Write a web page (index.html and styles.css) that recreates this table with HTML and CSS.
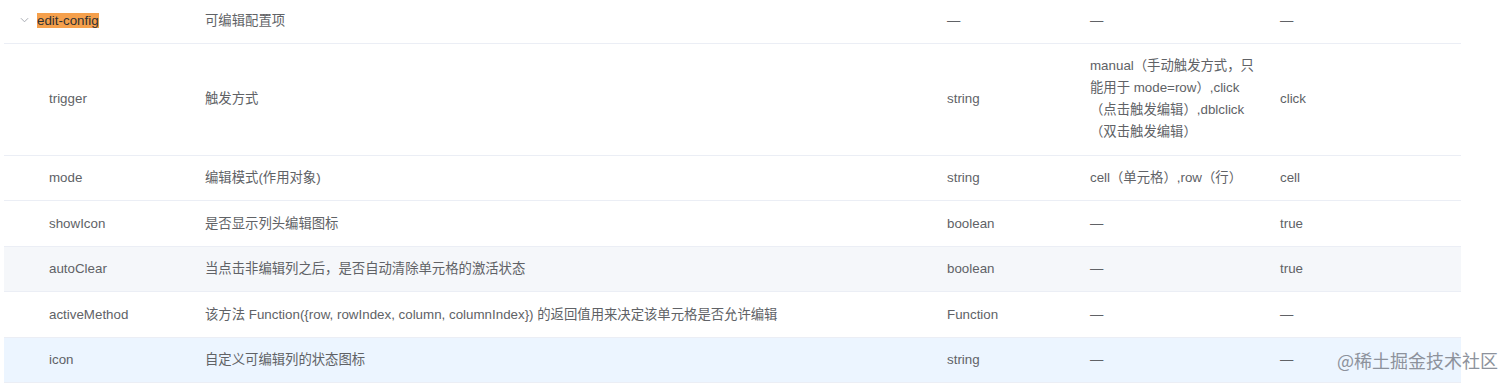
FILE: index.html
```html
<!DOCTYPE html>
<html lang="zh-CN">
<head>
<meta charset="utf-8">
<title>edit-config</title>
<link rel="stylesheet" href="styles.css">
</head>
<body>
<div class="page">
  <table class="api-table">
    <colgroup>
      <col class="c-name">
      <col class="c-desc">
      <col class="c-type">
      <col class="c-values">
      <col class="c-default">
    </colgroup>
    <tbody>
      <tr class="row">
        <td class="cell"><span class="expand"><svg viewBox="0 0 10 6" width="9" height="6"><path d="M1 1 L5 5 L9 1" fill="none" stroke="#a8abb2" stroke-width="1.1"/></svg></span><span class="hl">edit-config</span></td>
        <td class="cell">可编辑配置项</td>
        <td class="cell">—</td>
        <td class="cell">—</td>
        <td class="cell">—</td>
      </tr>
      <tr class="row">
        <td class="cell"><span class="indent">trigger</span></td>
        <td class="cell">触发方式</td>
        <td class="cell">string</td>
        <td class="cell cell-multi">manual（手动触发方式，只能用于 mode=row）,click（点击触发编辑）,dblclick（双击触发编辑）</td>
        <td class="cell">click</td>
      </tr>
      <tr class="row">
        <td class="cell"><span class="indent">mode</span></td>
        <td class="cell">编辑模式(作用对象)</td>
        <td class="cell">string</td>
        <td class="cell">cell（单元格）,row（行）</td>
        <td class="cell">cell</td>
      </tr>
      <tr class="row">
        <td class="cell"><span class="indent">showIcon</span></td>
        <td class="cell">是否显示列头编辑图标</td>
        <td class="cell">boolean</td>
        <td class="cell">—</td>
        <td class="cell">true</td>
      </tr>
      <tr class="row row-stripe">
        <td class="cell"><span class="indent">autoClear</span></td>
        <td class="cell">当点击非编辑列之后，是否自动清除单元格的激活状态</td>
        <td class="cell">boolean</td>
        <td class="cell">—</td>
        <td class="cell">true</td>
      </tr>
      <tr class="row">
        <td class="cell"><span class="indent">activeMethod</span></td>
        <td class="cell">该方法 Function({row, rowIndex, column, columnIndex}) 的返回值用来决定该单元格是否允许编辑</td>
        <td class="cell">Function</td>
        <td class="cell">—</td>
        <td class="cell">—</td>
      </tr>
      <tr class="row row-current">
        <td class="cell"><span class="indent">icon</span></td>
        <td class="cell">自定义可编辑列的状态图标</td>
        <td class="cell">string</td>
        <td class="cell">—</td>
        <td class="cell">—</td>
      </tr>
    </tbody>
  </table>
  <div class="watermark">@稀土掘金技术社区</div>
</div>
</body>
</html>
```

FILE: styles.css
```css
html, body {
  margin: 0;
  padding: 0;
  background: #ffffff;
  overflow: hidden;
}

.page {
  position: relative;
  width: 1512px;
  height: 388px;
  overflow: hidden;
  font-family: "Liberation Sans", Arial, "Noto Sans CJK SC", sans-serif;
  font-size: 13.35px;
  color: #606266;
}

.api-table {
  margin: -2px 0 0 4px;
  width: 1457px;
  table-layout: fixed;
  border-collapse: collapse;
  border-spacing: 0;
}

.c-name { width: 191px; }
.c-desc { width: 742px; }
.c-type { width: 143px; }
.c-values { width: 190px; }
.c-default { width: 191px; }

.row {
  border-bottom: 1px solid #ebeef5;
}

.row-stripe { background: #f5f7fa; }
.row-current { background: #ecf5ff; }

.cell {
  padding: 11.5px 10px;
  line-height: 21.5px;
  vertical-align: middle;
  word-break: break-all;
  text-align: left;
}

.cell-multi {
  line-height: 22px;
}

.expand {
  display: inline-block;
  width: 20px;
  margin-right: 3px;
  text-align: center;
  vertical-align: middle;
  line-height: 0;
  position: relative;
  top: -1px;
}

.hl {
  background: #f5a04c;
  color: #303133;
}

.indent {
  padding-left: 35px;
}

.watermark {
  position: absolute;
  right: 14px;
  top: 348px;
  font-size: 18px;
  line-height: 24px;
  color: #8d929c;
  font-family: "Noto Sans CJK SC", sans-serif;
}
```
